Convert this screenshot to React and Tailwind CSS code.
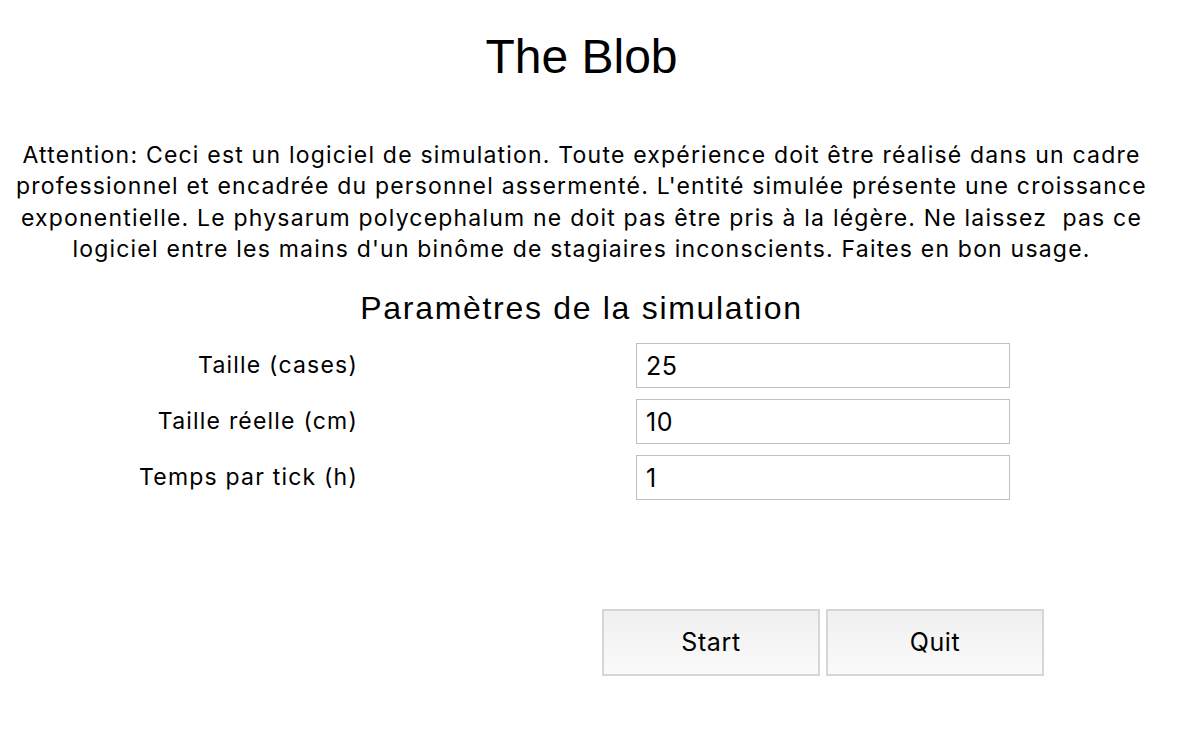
const lines = [
  "Attention: Ceci est un logiciel de simulation. Toute expérience doit être réalisé dans un cadre",
  "professionnel et encadrée du personnel assermenté. L'entité simulée présente une croissance",
  "exponentielle. Le physarum polycephalum ne doit pas être pris à la légère. Ne laissez  pas ce",
  "logiciel entre les mains d'un binôme de stagiaires inconscients. Faites en bon usage.",
];

const fields = [
  { label: "Taille (cases)", value: "25" },
  { label: "Taille réelle (cm)", value: "10" },
  { label: "Temps par tick (h)", value: "1" },
];

const body = { fontFamily: "Inter, 'Noto Sans', sans-serif" };
const helv = { fontFamily: "'Liberation Sans', Arial, sans-serif" };

function App() {
  return (
    <div className="w-[1197px] h-[734px] bg-white text-black overflow-hidden">
      <div className="w-[1163px] flex flex-col items-center">
        <h1 className="mt-[29px] text-[48px] leading-[56px]" style={helv}>
          The Blob
        </h1>

        <div
          className="mt-[55px] text-[23px] leading-[31.3px] tracking-[1.2px] text-center"
          style={body}
        >
          {lines.map((l) => (
            <div key={l} className="whitespace-pre">
              {l}
            </div>
          ))}
        </div>

        <h2 className="mt-[23px] text-[32px] leading-[40px] tracking-[1.7px]" style={helv}>
          Paramètres de la simulation
        </h2>
      </div>

      <div className="mt-[15px] flex flex-col gap-[11px]" style={body}>
        {fields.map((f) => (
          <div key={f.label} className="flex items-center h-[45px]">
            <div className="w-[358px] text-right text-[23px] tracking-[1.2px]">{f.label}</div>
            <input
              readOnly
              value={f.value}
              className="ml-[278px] w-[374px] h-[45px] border border-[#c0c0c0] pl-[9px] text-[25px] tracking-[0.5px] outline-none bg-white"
              style={body}
            />
          </div>
        ))}
      </div>

      <div className="mt-[109px] ml-[602px] flex gap-[6px]" style={body}>
        <button className="w-[218px] h-[67px] border-2 border-[#d6d6d6] bg-gradient-to-b from-[#f0f0f0] to-[#fafafa] text-[25px] tracking-[0.6px]">
          Start
        </button>
        <button className="w-[218px] h-[67px] border-2 border-[#d6d6d6] bg-gradient-to-b from-[#f0f0f0] to-[#fafafa] text-[25px] tracking-[0.6px]">
          Quit
        </button>
      </div>
    </div>
  );
}

export default App;
